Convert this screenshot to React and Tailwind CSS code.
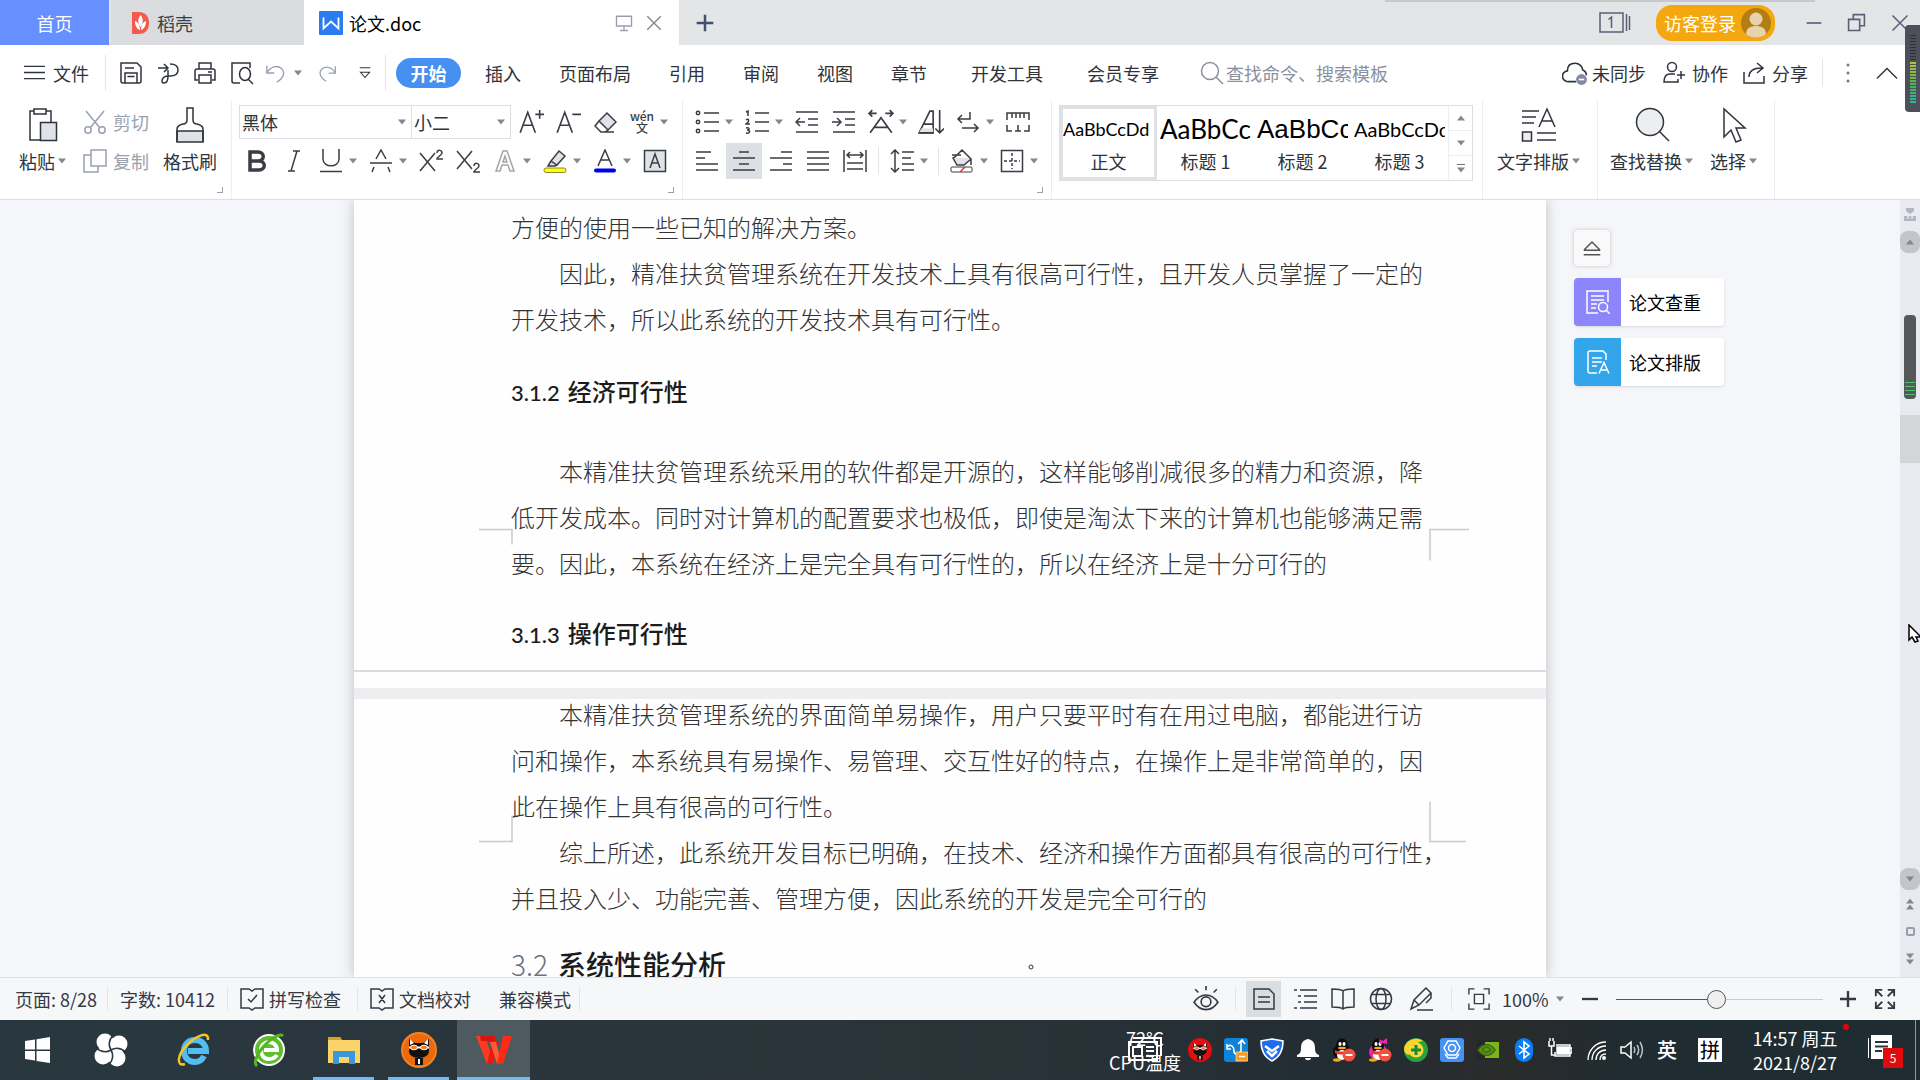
import React, { useState } from 'react';

// Base wrapper for all line icons
function Icon({ size = 24, box = 24, sw = 1.5, className = '', children }) {
    return (
        <svg
            width={size}
            height={size}
            viewBox={`0 0 ${box} ${box}`}
            fill="none"
            stroke="currentColor"
            strokeWidth={sw}
            className={`shrink-0 ${className}`}
            aria-hidden="true"
        >
            {children}
        </svg>
    );
}

function Caret() {
    return (
        <svg width="10" height="6" viewBox="0 0 10 6" className="shrink-0" aria-hidden="true">
            <path d="M1 0.5h8L5 5.5z" fill="#85878c" />
        </svg>
    );
}

function Tool({ label, active, split, dim, children }) {
    return (
        <button aria-label={label} className={`flex h-9 shrink-0 items-center gap-[3px] ${dim ? 'text-[#a3a5a9]' : 'text-[#3a3d44]'}`}>
            <span className={active ? '-mx-1 flex h-9 w-9 items-center justify-center bg-[#dcdfe3]' : 'flex h-9 w-7 items-center justify-center'}>
                {children}
            </span>
            {split && <Caret />}
        </button>
    );
}

const Divider = ({ className = 'h-9' }) => <span className={`w-px shrink-0 bg-[#e3e5e8] ${className}`} />;

const menus = ['插入', '页面布局', '引用', '审阅', '视图', '章节', '开发工具', '会员专享'];

function TitleBar() {
    return (
        <header className="relative flex h-[45px] shrink-0 items-stretch bg-[#e3e5e6] text-lg text-[#3b3f48]">
            <button className="w-[109px] bg-[#6690ff] text-white">首页</button>
            <button className="flex w-[195px] items-center gap-[7px] border-l-2 border-[#e3e5e6] bg-[#dadcdf] pl-5">
                <svg width="19" height="22" viewBox="0 0 19 22" aria-hidden="true">
                    <path d="M1 0h7c7 0 10 5 10 11s-3 11-10 11H1z" fill="#f55b4c" />
                    <path d="M9.500 3c3 4 3 8 0 12C6.500 11 6.500 7 9.500 3z" fill="#fff" />
                    <path d="M4 9c3 1 5 4 5 9-3-1-5-4-5-9zM15 9c-3 1-5 4-5 9 3-1 5-4 5-9z" fill="#fff" />
                </svg>
                稻壳
            </button>
            <div className="flex w-[375px] items-center bg-white pl-[15px] text-black">
                <svg width="24" height="24" viewBox="0 0 24 24" aria-hidden="true">
                    <rect width="24" height="24" rx="1" fill="#2a7cf0" />
                    <path d="M4.500 6.500v11L12 10.500l7.500 7V6.500" fill="none" stroke="#fff" strokeWidth="1.800" />
                </svg>
                <span className="ml-1.5 flex-1">论文.doc</span>
                <button aria-label="在桌面打开" className="mr-3 text-[#9aa0ab]">
                    <Icon size={18} sw={1.800}><path d="M2 3h20v13H2zM12 16v6M7 22h10" /></Icon>
                </button>
                <button aria-label="关闭标签" className="mr-4 text-[#7d838f]">
                    <Icon size={18} sw={1.800}><path d="M3 3l18 18M21 3L3 21" /></Icon>
                </button>
            </div>
            <button aria-label="新建" className="ml-4 text-[#44506c]">
                <Icon size={20} sw={3}><path d="M12 2v20M2 12h20" /></Icon>
            </button>

            <div className="ml-auto flex items-center pr-[11px] text-[#596076]">
                <button aria-label="窗口列表">
                    <svg width="32" height="24" viewBox="0 0 32 24" fill="none" stroke="currentColor" strokeWidth="1.500" aria-hidden="true">
                        <path d="M1 2h23v19H1zM27.500 3v17M30.500 5v14M9.500 8.500l3-2.500v11" />
                    </svg>
                </button>
                <Divider className="ml-3 h-7" />
                <button className="ml-3 flex h-9 items-center gap-[5px] rounded-2xl bg-[#f5a70f] pl-2 pr-1 text-white">
                    访客登录
                    <svg width="30" height="30" viewBox="0 0 30 30" aria-hidden="true">
                        <circle cx="15" cy="15" r="15" fill="#b27d12" />
                        <ellipse cx="15" cy="11" rx="6.500" ry="6.500" fill="#e6d3ac" />
                        <path d="M5 26c0-6 5-8 10-8s10 2 10 8c-5 5-15 5-20 0z" fill="#e6d3ac" />
                    </svg>
                </button>
                <Divider className="ml-3 h-7" />
                <button aria-label="最小化" className="ml-[18px]">
                    <Icon size={16} sw={2.500}><path d="M1 12h22" /></Icon>
                </button>
                <button aria-label="还原" className="ml-[25px]">
                    <Icon size={19} sw={2}><path d="M2 8h14v14H2zM8 8V2h14v14h-6" /></Icon>
                </button>
                <button aria-label="关闭" className="ml-[25px]">
                    <Icon size={18} sw={2}><path d="M2 2l20 20M22 2L2 22" /></Icon>
                </button>
            </div>
            <div className="absolute right-[105px] top-0 h-0.5 w-[430px] bg-[#c6c8c9]" />
        </header>
    );
}

function MenuBar() {
    return (
        <nav className="flex h-[55px] shrink-0 items-center text-lg text-[#2f333b]">
            <button className="ml-6 flex items-center gap-2">
                <Icon size={21}><path d="M0 5h24M0 12h24M0 19h24" /></Icon>
                文件
            </button>
            <Divider className="ml-4 mr-1.5 h-9" />
            <button aria-label="保存" className="flex w-[37px] justify-center">
                <Icon><path d="M2 2h16l4 4v14a2 2 0 0 1-2 2H4a2 2 0 0 1-2-2zM6 22V12h12v10M6 7h9M8.500 15.500h7" /></Icon>
            </button>
            <button aria-label="输出为PDF" className="flex w-[37px] justify-center">
                <Icon><path d="M2 7h9M8 3l4 4-4 4M14 3c5 0 8 2 8 6s-3 6-8 6h-2c-6 0-8 7-4 7 3 0 4-3 4-7V9" /></Icon>
            </button>
            <button aria-label="打印" className="flex w-[37px] justify-center">
                <Icon><path d="M6 8V2h12v6M5 19H2V10a2 2 0 0 1 2-2h16a2 2 0 0 1 2 2v9h-3M6 14h12v8H6zM15 11h4" /></Icon>
            </button>
            <button aria-label="打印预览" className="flex w-[37px] justify-center">
                <Icon><path d="M10 22H4a2 2 0 0 1-2-2V2h18v5M18 18l5 5" /><ellipse cx="15" cy="13" rx="5.500" ry="6.500" /></Icon>
            </button>
            <button aria-label="撤销" className="flex w-[43px] items-center justify-end gap-1.5 text-gray-400">
                <Icon size={22}><path d="M2 4v8h8M2 12C6 5 13 3 18 7c4 4 3 10-5 15" /></Icon>
                <Caret />
            </button>
            <button aria-label="恢复" className="ml-1.5 flex w-[36px] justify-center text-gray-400">
                <Icon size={20}><path d="M22 4v8h-8M22 12C18 5 11 3 6 7c-4 4-3 10 5 15" /></Icon>
            </button>
            <button aria-label="自定义快速访问" className="flex w-10 justify-center">
                <Icon size={18}><path d="M5 5h14M6 11l6 7 6-7z" /></Icon>
            </button>
            <Divider className="h-9" />
            <button className="ml-2.5 h-[30px] w-[65px] rounded-full bg-[#4690f2] font-bold leading-[28px] text-white">开始</button>
            <div className="ml-6 flex gap-[38px] whitespace-nowrap">
                {menus.map(m => (
                    <button key={m} className={m === '开发工具' ? 'px-1.5' : ''}>{m}</button>
                ))}
            </div>
            <label className="ml-[41px] flex items-center gap-0.5 text-[#8a90a0]">
                <Icon><circle cx="10" cy="10" r="8.500" /><path d="M16 16l7 7" /></Icon>
                <input
                    aria-label="查找命令、搜索模板"
                    placeholder="查找命令、搜索模板"
                    className="w-[180px] bg-transparent outline-none placeholder:text-[#8a90a0]"
                />
            </label>

            <div className="ml-auto flex items-center whitespace-nowrap pr-[22px]">
                <button className="flex items-center gap-1">
                    <Icon size={26}>
                        <path d="M13 20H6a5 5 0 0 1-1-10C5 5 8 3 12 3s7 3 7 6c2 1 3.500 2 3.500 5" />
                        <circle cx="18" cy="18" r="5" fill="#8289a5" stroke="none" />
                        <path d="M15.500 18h5" stroke="#fff" />
                    </Icon>
                    未同步
                </button>
                <button className="ml-4 flex items-center gap-1.5">
                    <Icon><path d="M13 13H8c-4 0-6 3-6 8h14v-3M19 10v8M15 14h8" /><circle cx="10" cy="6" r="4.500" /></Icon>
                    协作
                </button>
                <button className="ml-3.5 flex items-center gap-1.5">
                    <Icon><path d="M2 11v11h20v-7M7 16c0-6 4-9 13-9M15 2l6 5-6 5" /></Icon>
                    分享
                </button>
                <Divider className="ml-3.5 h-7" />
                <button aria-label="更多" className="ml-[13px]">
                    <Icon><g fill="#777b83" stroke="none"><circle cx="12" cy="4" r="1.500" /><circle cx="12" cy="12" r="1.500" /><circle cx="12" cy="20" r="1.500" /></g></Icon>
                </button>
                <button aria-label="折叠功能区" className="ml-4">
                    <Icon size={22}><path d="M1 18L12 7l11 11" /></Icon>
                </button>
            </div>
        </nav>
    );
}

function Corner() {
    return <span className="absolute bottom-1.5 right-2 h-1.5 w-1.5 border-b border-r border-gray-400" />;
}

function StylePreview({ name, active, children }) {
    return (
        <button className={`flex w-[97px] flex-col overflow-hidden text-left ${active ? 'border-[3px] border-[#dfe1e4]' : 'border-[3px] border-transparent'}`}>
            <span className="flex h-10 items-center overflow-hidden whitespace-nowrap text-black">{children}</span>
            <span className="w-full text-center leading-6">{name}</span>
        </button>
    );
}

function Ribbon() {
    return (
        <section className="flex shrink-0 border-b border-[#dcdee1] text-lg text-[#2f333b] whitespace-nowrap">
            {/* Clipboard */}
            <div className="relative flex border-r border-[#eceef0] pb-5 pl-[19px] pr-3.5 pt-[5px]">
                <button className="flex w-12 flex-col items-center gap-1">
                    <Icon size={36} box={36} className="mt-0.5">
                        <path d="M9 4H5v29h10M21 4h5v11M9 2h12v5H9z" /><path d="M15.500 15.500h16v18h-16z" fill="#dfe2e6" />
                    </Icon>
                    <span className="flex items-center gap-0.5">粘贴<Caret /></span>
                </button>
                <div className="ml-4 flex flex-col gap-1 text-gray-400">
                    <button className="flex h-[34px] items-center gap-1.5">
                        <Icon><path d="M3 1l14 17M21 1L7 18" /><circle cx="5" cy="20" r="3.200" /><circle cx="19" cy="20" r="3.200" /></Icon>
                        剪切
                    </button>
                    <button className="flex h-9 items-center gap-1.5">
                        <Icon><path d="M8 1h15v16H8zM8 6H1v17h14v-6" /></Icon>
                        复制
                    </button>
                </div>
                <button className="ml-3.5 flex flex-col items-center gap-1">
                    <Icon size={36} box={36} className="mt-0.5">
                        <path d="M5 24h26v11H5z" fill="#dfe2e6" />
                        <path d="M5 35V22c0-3 2-4 6-5 3 0 4-2 4-4V1h6v12c0 2 1 4 4 4 4 1 6 2 6 5v13" />
                    </Icon>
                    格式刷
                </button>
                <Corner />
            </div>

            {/* Font */}
            <div className="relative flex flex-col gap-1 border-r border-[#eceef0] pb-5 pl-[7px] pr-[13px] pt-[5px]">
                <div className="flex h-[34px] items-center">
                    <div className="mr-1.5 flex h-[34px] border border-[#dcdfe2]">
                        <div className="flex w-[172px] items-center border-r border-[#dcdfe2] pl-0.5 pr-1">
                            <select aria-label="字体" className="min-w-0 flex-1 appearance-none bg-transparent outline-none"><option>黑体</option></select>
                            <Caret />
                        </div>
                        <div className="flex w-[98px] items-center pl-0.5 pr-1">
                            <select aria-label="字号" className="min-w-0 flex-1 appearance-none bg-transparent outline-none"><option>小二</option></select>
                            <Caret />
                        </div>
                    </div>
                    <div className="flex gap-[9px]">
                        <Tool label="增大字号"><Icon size={26}><path d="M2 22L9 3l7 19M5 15h9M20 1v8M16 5h8" /></Icon></Tool>
                        <Tool label="减小字号"><Icon size={26}><path d="M2 22L9 3l7 19M5 15h9M16 5h8" /></Icon></Tool>
                        <Tool label="清除格式"><Icon><path d="M14 3l9 9-8 8-9-9z" fill="#dfe2e6" /><path d="M6 11l-4 5 6 6h4l3-2M8 22h13" /></Icon></Tool>
                        <Tool label="拼音指南" split>
                            <span className="flex flex-col items-center text-xs font-medium leading-3"><span>wén</span><span>文</span></span>
                        </Tool>
                    </div>
                </div>
                <div className="flex gap-[9px] pl-1">
                    <Tool label="加粗"><Icon sw={3.500}><path d="M5 3h8c7 0 7 9 0 9H5zM5 12h9c7 0 7 9 0 9H5z" /></Icon></Tool>
                    <Tool label="倾斜"><Icon><path d="M11 2h7M6 22h7M15 2L9 22" /></Icon></Tool>
                    <Tool label="下划线" split><Icon><path d="M4 0v10c0 9 16 9 16 0V0M1 22.500h22" /></Icon></Tool>
                    <Tool label="删除线" split><Icon><path d="M7 10l5-9 5 9M1 14h22M5 18l-2 5M19 18l2 5" /></Icon></Tool>
                    <Tool label="上标"><Icon><path d="M1 4l15 18M16 4L1 22M18 4c0-4 5-3 5 0 0 2-5 4-5 6h6" /></Icon></Tool>
                    <Tool label="下标"><Icon><path d="M1 2l15 18M16 2L1 20M18 17c0-4 5-3 5 0 0 2-5 4-5 6h6" /></Icon></Tool>
                    <Tool label="文字效果" split dim><Icon><path d="M3 22L10 2h4l7 20h-4l-2-6H9l-2 6zM10 13h4l-2-6z" /></Icon></Tool>
                    <Tool label="突出显示" split>
                        <Icon><path d="M8 12l8-10 6 5-8 9zM8 12l-3 5h7l2-1" fill="#dfe2e6" /><rect x="1" y="19" width="22" height="4.500" rx="2" fill="#ff0" stroke="#888a45" strokeWidth="1" /></Icon>
                    </Tool>
                    <Tool label="字体颜色" split>
                        <Icon><path d="M5 17l7-16 7 16M8 11h8" /><rect x="1" y="19.500" width="22" height="4" rx="2" fill="#00e" stroke="none" /></Icon>
                    </Tool>
                    <Tool label="字符底纹"><Icon><path d="M1.500 1.500h21v21h-21z" fill="#dfe2e6" /><path d="M7 19l5-14 5 14M9 14h6" /></Icon></Tool>
                </div>
                <Corner />
            </div>

            {/* Paragraph */}
            <div className="relative flex flex-col gap-1 border-r border-[#eceef0] pb-5 pl-2.5 pr-3 pt-[5px]">
                <div className="flex h-[34px] items-center gap-[9px]">
                    <Tool label="项目符号" split>
                        <Icon><circle cx="3" cy="3" r="1.700" /><circle cx="3" cy="12" r="1.700" /><circle cx="3" cy="21" r="1.700" /><path d="M9 3h15M9 12h15M9 21h15" /></Icon>
                    </Tool>
                    <Tool label="编号" split>
                        <Icon><path d="M1 2l2-1v5M1 10c3-2 4 1 0 4h4M1 18c4-1 4 2 1 2 4 0 3 4-1 3M10 3h14M10 12h14M10 21h14" /></Icon>
                    </Tool>
                    <Tool label="减少缩进"><Icon><path d="M1 2h22M13 9h10M13 15h10M1 22h22M10 12H1M5 8l-4 4 4 4" /></Icon></Tool>
                    <Tool label="增加缩进"><Icon><path d="M1 2h22M13 9h10M13 15h10M1 22h22M0 12h9M5 8l4 4-4 4" /></Icon></Tool>
                    <Tool label="中文版式" split><Icon size={26}><path d="M2 22L12 8l10 14M6 17h12M8 4H1M4 1L1 4l3 3M16 4h7M20 1l3 3-3 3" /></Icon></Tool>
                    <Tool label="排序"><Icon size={26}><path d="M1 22L11 2h3v20zM5 14h9M20 1v21M16 18l4 4 4-4" /><path d="M3 18h11v4H1z" fill="#dfe2e6" stroke="none" /><path d="M1 22h13" /></Icon></Tool>
                    <Tool label="换行符" split><Icon><path d="M14 2v7H2M6 5L2 9l4 4M6 18h16M18 14l4 4-4 4" /></Icon></Tool>
                    <Tool label="制表位"><Icon><path d="M1 10V3h22v7M6 3v5M10 3v5M14 3v5M18 3v5M1 15v6h5M23 15v6h-5M12 15v6M9 21h6" /></Icon></Tool>
                </div>
                <div className="flex items-center gap-[9px]">
                    <Tool label="左对齐"><Icon><path d="M1 3h15M1 9h9M1 15h22M1 21h22" /></Icon></Tool>
                    <Tool label="居中" active><Icon><path d="M7 3h10M1 9h22M7 15h10M1 21h22" /></Icon></Tool>
                    <Tool label="右对齐"><Icon><path d="M12 3h11M1 9h22M14 15h9M1 21h22" /></Icon></Tool>
                    <Tool label="两端对齐"><Icon><path d="M1 3h22M1 9h22M1 15h22M1 21h22" /></Icon></Tool>
                    <Tool label="分散对齐"><Icon><path d="M1 1v22M23 1v22M4 6h16M7 3L4 6l3 3M17 3l3 3-3 3M4 14h16M4 20h16" /></Icon></Tool>
                    <Divider className="h-7" />
                    <Tool label="行距" split><Icon><path d="M5 2v20M1 5l4-4 4 4M1 19l4 4 4-4M12 3h12M12 9h9M12 15h12M12 21h12" /></Icon></Tool>
                    <Divider className="h-7" />
                    <Tool label="底纹颜色" split>
                        <Icon><path d="M4 9h16l-6 7H8z" fill="#dfe2e6" stroke="none" /><path d="M2 6h9M5 8l7-7 9 9-7 6H7L3 9zM21 10v6" /><rect x="1" y="18" width="21" height="5" rx="1" fill="#fff" strokeWidth="1" /><path d="M10 23l5-5" stroke="#d33" /></Icon>
                    </Tool>
                    <Tool label="边框" split><Icon><path d="M1.500 1.500h21v21h-21z" /><path d="M12 4v16M4 12h16" strokeDasharray="3 2" /></Icon></Tool>
                </div>
                <Corner />
            </div>

            {/* Styles gallery */}
            <div className="border-r border-[#eceef0] pl-[7px] pr-[9px] pt-[5px]">
                <div className="flex h-[76px] border border-[#dcdfe2]">
                    <StylePreview name="正文" active><span className="font-['Lato'] text-lg">AaBbCcDd</span></StylePreview>
                    <StylePreview name="标题 1"><span className="font-['Lato'] text-[26px]">AaBbCc</span></StylePreview>
                    <StylePreview name="标题 2"><span className="font-['Liberation_Sans'] text-[26px]">AaBbCc</span></StylePreview>
                    <StylePreview name="标题 3"><span className="font-['Lato'] text-xl">AaBbCcDd</span></StylePreview>
                    <div className="flex w-6 flex-col items-center divide-y divide-[#eceef0] border-l border-[#eceef0]">
                        <button aria-label="上一行" className="flex w-full flex-1 items-center justify-center"><span className="rotate-180"><Caret /></span></button>
                        <button aria-label="下一行" className="flex w-full flex-1 items-center justify-center"><Caret /></button>
                        <button aria-label="更多样式" className="flex w-full flex-1 flex-col items-center justify-center gap-0.5"><span className="h-px w-2 bg-gray-500" /><Caret /></button>
                    </div>
                </div>
            </div>

            <div className="border-r border-[#eceef0] pl-3.5 pr-4 pt-[7px]">
                <button className="flex flex-col items-center gap-1">
                    <Icon size={36} box={36}><path d="M1 4h17M1 10h14M1 16h12M18 20L26 2l8 18M21 14h10M16 26h19M16 33h19" /><path d="M1.500 25h9v9h-9z" fill="#eceef0" /></Icon>
                    <span className="flex items-center gap-0.5">文字排版<Caret /></span>
                </button>
            </div>
            <div className="flex gap-4 border-r border-[#eceef0] pl-3 pr-4 pt-[7px]">
                <button className="flex flex-col items-center gap-1">
                    <Icon size={36} box={36}><circle cx="16" cy="15" r="13.500" fill="#eceef0" /><path d="M25 24l10 10" /></Icon>
                    <span className="flex items-center gap-0.5">查找替换<Caret /></span>
                </button>
                <button className="flex flex-col items-center gap-1">
                    <Icon size={36} box={36}><path d="M8 2v28l7-7 5 12 5-2-5-12h9z" /></Icon>
                    <span className="flex items-center gap-0.5">选择<Caret /></span>
                </button>
            </div>
        </section>
    );
}

function Line({ indent, children }) {
    return <span className={indent ? 'block pl-12' : 'block'}>{children}</span>;
}

function Page() {
    return (
        <article className="relative w-[1192px] shrink-0 overflow-hidden bg-[#fefefe] pt-1 text-2xl leading-[46px] text-[#333] shadow-[0_0_12px_rgba(60,64,72,0.3)]">
            <div className="whitespace-nowrap pl-[157px] font-light">
                <p>
                    <Line>方便的使用一些已知的解决方案。</Line>
                    <Line indent>因此，精准扶贫管理系统在开发技术上具有很高可行性，且开发人员掌握了一定的</Line>
                    <Line>开发技术，所以此系统的开发技术具有可行性。</Line>
                </p>
                <h3 className="mt-[26px] font-medium text-[#1c1c1c]"><span className="mr-2 font-['Lato'] text-[22px]">3.1.2</span>经济可行性</h3>
                <p className="mt-8">
                    <Line indent>本精准扶贫管理系统采用的软件都是开源的，这样能够削减很多的精力和资源，降</Line>
                    <Line>低开发成本。同时对计算机的配置要求也极低，即使是淘汰下来的计算机也能够满足需</Line>
                    <Line>要。因此，本系统在经济上是完全具有可行性的，所以在经济上是十分可行的</Line>
                </p>
                <h3 className="mt-6 font-medium text-[#1c1c1c]"><span className="mr-2 font-['Lato'] text-[22px]">3.1.3</span>操作可行性</h3>
            </div>

            {/* Page break */}
            <div className="mt-3 border-t-2 border-[#dadbdd]" />
            <div className="mt-4 h-[11px] bg-[#eeeef0]" />

            <div className="-mt-2 whitespace-nowrap pl-[157px] font-light">
                <p>
                    <Line indent>本精准扶贫管理系统的界面简单易操作，用户只要平时有在用过电脑，都能进行访</Line>
                    <Line>问和操作，本系统具有易操作、易管理、交互性好的特点，在操作上是非常简单的，因</Line>
                    <Line>此在操作上具有很高的可行性。</Line>
                </p>
                <p>
                    <Line indent>综上所述，此系统开发目标已明确，在技术、经济和操作方面都具有很高的可行性，</Line>
                    <Line>并且投入少、功能完善、管理方便，因此系统的开发是完全可行的</Line>
                </p>
                <h2 className="mt-5 text-[28px] text-[#1c1c1c]"><span className="mr-2.5 font-light text-gray-500">3.2</span><span className="font-medium">系统性能分析</span></h2>
            </div>

            {/* Margin corner marks */}
            <svg width="1192" height="778" viewBox="0 0 1192 778" className="absolute left-0 top-0" fill="none" stroke="#c9cacc" strokeWidth="1.500" aria-hidden="true">
                <path d="M125 329.500h33v15M1115 329.500h-39v31M125 641.500h33v-26M1112 641.500h-36v-40" />
                <circle cx="677" cy="767" r="2" stroke="#333" strokeWidth="1" />
            </svg>
        </article>
    );
}

function SidePanel() {
    return (
        <aside className="min-w-0 flex-1 text-lg text-black">
            <div className="flex flex-col items-start gap-3 pl-7 pt-[30px]">
                <button aria-label="收起" className="flex h-9 w-9 items-center justify-center rounded-sm bg-[#f9f9fa] text-[#555] shadow-[0_0_4px_rgba(0,0,0,0.2)]">
                    <Icon size={18} sw={2}><path d="M2 14L12 4l10 10v1H2zM1 21h22" /></Icon>
                </button>
                <button className="flex h-12 w-[150px] items-center overflow-hidden rounded bg-white shadow">
                    <span className="flex h-12 w-[47px] items-center justify-center bg-[#8d85fb] text-white">
                        <Icon><path d="M12 23H1V1h21v11M5 6h13M5 10h13M5 14h6M5 18h5" /><circle cx="17" cy="17" r="4.500" /><path d="M20 20l4 4" /></Icon>
                    </span>
                    <span className="pl-2">论文查重</span>
                </button>
                <button className="flex h-12 w-[150px] items-center overflow-hidden rounded bg-white shadow">
                    <span className="flex h-12 w-[47px] items-center justify-center bg-[#33a5ea] text-white">
                        <Icon><path d="M11 23H4a2 2 0 0 1-2-2V3a2 2 0 0 1 2-2h13l3 3v6M6 8h10M6 12h10M6 16h5M13 23.500l5-11 5 11M15 20h6" /></Icon>
                    </span>
                    <span className="pl-2">论文排版</span>
                </button>
            </div>
        </aside>
    );
}

function ScrollBar() {
    return (
        <div className="flex w-5 shrink-0 flex-col items-center bg-[#e9eaf1] text-[#8f93a3]">
            <svg width="14" height="14" viewBox="0 0 14 14" className="mt-2" fill="#b3b6bf" aria-hidden="true">
                <path d="M3 0h8v3L7 6 3 3zM1 8h12v5H1z" /><path d="M5 8v3M9 8v3" stroke="#fff" />
            </svg>
            <button aria-label="向上滚动" className="mt-[9px] flex h-[22px] w-5 items-center justify-center rounded-lg bg-[#c3c5cd]">
                <span className="rotate-180"><Caret /></span>
            </button>
            <div className="mt-[62px] flex h-[84px] w-3 flex-col justify-end gap-[3px] rounded bg-[#55575a] px-px pb-1">
                <span className="h-px bg-[#4fc274]" />
                <span className="h-px bg-[#4fc274]" />
                <span className="h-px bg-[#4fc274]" />
                <span className="h-px bg-[#4fc274]" />
            </div>
            <div className="mt-4 h-12 w-5 bg-[#d3d5d8]" />
            <div className="flex-1" />
            <button aria-label="向下滚动" className="flex h-[22px] w-5 items-center justify-center rounded-lg bg-[#c3c5cd]"><Caret /></button>
            <button aria-label="上一页" className="mt-2 flex h-3 flex-col"><span className="rotate-180"><Caret /></span><span className="rotate-180"><Caret /></span></button>
            <button aria-label="选择浏览对象" className="mt-[17px] h-[9px] w-[9px] rounded-[2px] border-2 border-[#9a9dab]" />
            <button aria-label="下一页" className="mb-3 mt-[17px] flex h-3 flex-col"><Caret /><Caret /></button>
        </div>
    );
}

function StatusBar() {
    const [zoom, setZoom] = useState(100);
    return (
        <footer className="flex h-[43px] shrink-0 items-center whitespace-nowrap border-t border-[#dfe1e4] bg-[#f5f7f9] pl-[15px] text-lg text-[#343943]">
            <span className="w-[92px]">页面: 8/28</span>
            <Divider className="h-6" />
            <span className="ml-3 w-[107px]">字数: 10412</span>
            <Divider className="h-6" />
            <button className="ml-3 flex items-center gap-[5px]">
                <Icon><path d="M9 2H1v19h8l3 2 3-2h8V2h-8l-3 2zM8 12l3 3 6-7" /></Icon>
                拼写检查
            </button>
            <Divider className="ml-4 h-6" />
            <button className="ml-3 flex items-center gap-[5px]">
                <Icon><path d="M9 2H1v19h8l3 2 3-2h8V2h-8l-3 2zM9 8l6 8M15 8l-6 8" /></Icon>
                文档校对
            </button>
            <button className="ml-7">兼容模式</button>
            <Divider className="ml-2 h-6" />

            <div className="ml-auto flex items-center pr-6">
                <button aria-label="护眼模式"><Icon size={26}><path d="M1 15c6-9 16-9 22 0-6 9-16 9-22 0zM12 4V0M5 6L2 3M19 6l3-3" /><circle cx="12" cy="14.500" r="4.500" /></Icon></button>
                <Divider className="ml-4 h-6" />
                <button aria-label="页面视图" className="ml-2.5 flex h-9 w-[35px] items-center justify-center bg-[#d9dee2]"><Icon><path d="M2 2h15l5 5v15H2zM6 10h12M6 15h12" /></Icon></button>
                <button aria-label="大纲" className="ml-3"><Icon><path d="M1 3h3M7 3h17M5 9h3M11 9h13M5 15h3M11 15h13M1 21h3M7 21h17" /></Icon></button>
                <button aria-label="阅读版式" className="ml-3.5"><Icon><path d="M12 4c-2-2-5-2-11-2v18c6 0 9 0 11 2 2-2 5-2 11-2V2C17 2 14 2 12 4zM12 4v18" /></Icon></button>
                <button aria-label="Web版式" className="ml-3.5"><Icon><circle cx="12" cy="12" r="10.500" /><ellipse cx="12" cy="12" rx="5" ry="10.500" /><path d="M3 7.500h18M3 16.500h18" /></Icon></button>
                <button aria-label="写作模式" className="ml-4"><Icon><path d="M2 22l3-9L17 1l5 5-12 12-8 4zM5 13l5 5M22 6v5l-5 5M8 23h16" /></Icon></button>
                <Divider className="ml-[18px] h-6" />
                <button aria-label="最佳显示比例" className="ml-4"><Icon size={22}><path d="M7 7h10v10H7zM1 7V1h6M17 1h6v6M23 17v6h-6M7 23H1v-6" /></Icon></button>
                <button className="ml-3 flex w-[63px] items-center justify-between">{zoom}%<Caret /></button>
                <button aria-label="缩小" className="ml-[17px]"><Icon size={16} sw={3.500}><path d="M0 12h24" /></Icon></button>
                <input
                    type="range"
                    min="0"
                    max="206"
                    value={zoom}
                    onChange={e => setZoom(Number(e.target.value))}
                    aria-label="显示比例"
                    className="ml-[18px] h-5 w-[207px] appearance-none bg-[linear-gradient(to_right,#555_48%,#c9cbce_48%)] bg-[length:100%_1px] bg-center bg-no-repeat [&::-webkit-slider-thumb]:h-[19px] [&::-webkit-slider-thumb]:w-[19px] [&::-webkit-slider-thumb]:appearance-none [&::-webkit-slider-thumb]:rounded-full [&::-webkit-slider-thumb]:border [&::-webkit-slider-thumb]:border-solid [&::-webkit-slider-thumb]:border-[#555] [&::-webkit-slider-thumb]:bg-[#efeff0]"
                />
                <button aria-label="放大" className="ml-[17px]"><Icon size={16} sw={3.500}><path d="M12 0v24M0 12h24" /></Icon></button>
                <button aria-label="全屏显示" className="ml-[18px]"><Icon size={22} sw={2}><path d="M2 9V2h7M2 2l7 7M15 2h7v7M22 2l-7 7M22 15v7h-7M22 22l-7-7M9 22H2v-7M2 22l7-7" /></Icon></button>
            </div>
        </footer>
    );
}

function Penguin({ pink }) {
    return (
        <svg width="24" height="24" viewBox="0 0 24 24" aria-hidden="true">
            <ellipse cx="10" cy="14" rx="9" ry="8" fill={pink ? '#f026b8' : '#0b0b0b'} />
            <ellipse cx="10" cy="8" rx="6" ry="7.500" fill="#0b0b0b" />
            <ellipse cx="10" cy="17" rx="5" ry="5" fill="#fff" />
            <path d="M3 12c4 2 10 2 14 0v3c-5 2-10 2-14 0z" fill="#e33" />
            <ellipse cx="8" cy="6" rx="1.500" ry="2" fill="#fff" /><ellipse cx="12" cy="6" rx="1.500" ry="2" fill="#fff" />
            <ellipse cx="10" cy="10" rx="4" ry="1.300" fill="#f7a51c" />
            {pink && <path d="M11 1l4 2 4-3v6l-4-1-3 1z" fill="#f026b8" />}
            <ellipse cx="5" cy="22" rx="4" ry="1.700" fill="#f7a51c" />
            <circle cx="17" cy="17" r="6.500" fill="#f0523f" /><path d="M13.500 17h7" stroke="#fff" strokeWidth="2" />
        </svg>
    );
}

function CatFace({ size, bg, rim }) {
    return (
        <svg width={size} height={size} viewBox="0 0 36 36" aria-hidden="true">
            <circle cx="18" cy="18" r="17" fill={bg} stroke={rim} strokeWidth="2" />
            <path d="M8 7l6 4h8l6-4v12c0 4-4 7-10 7S8 23 8 19z" fill="#111" />
            <path d="M9 7l4 4-4 2zM27 7l-4 4 4 2z" fill="#fff" />
            <path d="M8 14.500h20v2H8z" fill="#fff" />
            <ellipse cx="13" cy="15.500" rx="3.500" ry="2.300" fill="#f47a20" stroke="#fff" />
            <ellipse cx="23" cy="15.500" rx="3.500" ry="2.300" fill="#f47a20" stroke="#fff" />
            <path d="M14 26h8v7h-8z" fill="#111" /><path d="M17 27h2v5h-2z" fill="#fff" />
        </svg>
    );
}

function TaskBar() {
    return (
        <div className="relative flex h-[60px] shrink-0 items-center bg-[linear-gradient(to_right,#293840,#2a3338_50%,#222d33_70%,#2b2b2b_78%,#1f2c32_85%)] text-lg text-white">
            <button aria-label="开始菜单" className="flex w-[73px] justify-center">
                <svg width="26" height="26" viewBox="0 0 26 26" fill="#fff" aria-hidden="true"><path d="M1 4l10-1.500v10H1zM12.500 2.300L26 0v12.500H12.500zM1 14h10v9.500L1 22zM12.500 14H26v12l-13.500-2z" /></svg>
            </button>
            <button aria-label="Fan" className="flex w-[76px] justify-center">
                <svg width="34" height="34" viewBox="0 0 34 34" aria-hidden="true">
                    <g fill="#fff">
                        <circle cx="11" cy="9" r="8.500" /><circle cx="25" cy="11" r="8.500" />
                        <circle cx="23" cy="25" r="8.500" /><circle cx="9" cy="23" r="8.500" /><circle cx="17" cy="17" r="6" />
                    </g>
                    <path d="M19 2c-4 5-5 10-2 15M32 19c-5-4-10-5-15-2M15 32c4-5 5-10 2-15M2 15c5 4 10 5 15 2" fill="none" stroke="#293840" strokeWidth="1.600" />
                </svg>
            </button>
            <button aria-label="Internet Explorer" className="flex w-[88px] justify-center">
                <svg width="34" height="36" viewBox="0 0 34 36" fill="none" aria-hidden="true">
                    <path d="M28 24c-2 4-5 6-9 6-7 0-11-5-11-11S12 8 19 8s11 5 11 11H12" stroke="#53bdf0" strokeWidth="6" />
                    <path d="M9 32c-9 3-8-9 2-19C20 4 33-2 32 8" stroke="#f5c42b" strokeWidth="2.500" />
                </svg>
            </button>
            <button aria-label="安全浏览器" className="flex w-16 justify-center">
                <svg width="34" height="36" viewBox="0 0 34 36" fill="none" aria-hidden="true">
                    <circle cx="17" cy="18" r="15" fill="#5fbf2b" stroke="#fff" strokeWidth="2" />
                    <path d="M25 23c-2 3-5 4-8 4-5 0-8-4-8-9s4-8 8-8 8 3 8 8H12" stroke="#fff" strokeWidth="4" />
                    <path d="M5 34c-4-3 0-12 7-20S28 1 31 4" stroke="#56b325" strokeWidth="3" />
                </svg>
            </button>
            <div className="ml-3 flex h-[60px] w-[61px] items-center justify-center border-b-[3px] border-[#76b9ed] pt-[3px]">
                <button aria-label="文件资源管理器">
                    <svg width="34" height="30" viewBox="0 0 34 30" aria-hidden="true">
                        <path d="M1 2h12l2 3h18v23H1z" fill="#fad36a" /><path d="M1 2h12l2 3H1z" fill="#d9a21b" />
                        <path d="M6 29V16h22v13h-6v-7H12v7z" fill="#3b97dc" />
                    </svg>
                </button>
            </div>
            <div className="ml-3.5 flex h-[60px] w-[61px] items-center justify-center border-b-[3px] border-[#76b9ed] pt-[3px]">
                <button aria-label="雷电"><CatFace size={36} bg="#e9690c" rim="#f58220" /></button>
            </div>
            <div className="ml-2 flex h-[60px] w-[73px] items-center justify-center border-b-[3px] border-[#76b9ed] bg-[#4d5a60] pt-[3px]">
                <button aria-label="WPS">
                    <svg width="36" height="28" viewBox="0 0 36 28" aria-hidden="true">
                        <path d="M0 0h9l9 28h-7z" fill="#ff3b1f" /><path d="M4 0h15v5H5z" fill="#d9140c" />
                        <path d="M16 6h7l-6 22h-6z" fill="#e8190f" /><path d="M14 6h6l6 22h-5z" fill="#ff5a35" /><path d="M27 0h9l-9 28h-6z" fill="#ff2a14" />
                    </svg>
                </button>
            </div>

            <div className="ml-auto flex items-center pr-1">
                <div className="relative flex w-[78px] flex-col items-center leading-6">
                    <span>72℃</span>
                    <span>CPU温度</span>
                    <svg width="36" height="26" viewBox="0 0 36 26" fill="none" stroke="#fff" strokeWidth="2" className="absolute left-[21px] top-[11px]" aria-hidden="true">
                        <path d="M2 5h28v18H2zM6 1h28v18M6 10h9v9H6zM19 10h8M19 14h8M19 19h8" />
                    </svg>
                </div>
                <div className="ml-1 flex items-center gap-3">
                    <CatFace size={24} bg="#e10f0f" rim="#e10f0f" />
                    <svg width="24" height="24" viewBox="0 0 24 24" aria-hidden="true">
                        <rect width="24" height="24" rx="3" fill="#0f83d8" /><path d="M3 9c4-4 7 0 7 4s4 4 7 0V4M14 6l4-4 3 4M3 6v5h4" fill="none" stroke="#fff" strokeWidth="1.600" />
                        <rect x="12" y="14" width="12" height="9" fill="#f79a1d" stroke="#fff" strokeWidth="0.500" /><path d="M15 18.500h6" stroke="#fff" strokeWidth="1.500" />
                    </svg>
                    <svg width="24" height="24" viewBox="0 0 24 24" aria-hidden="true">
                        <path d="M12 1l11 2c0 10-3 16-11 20C4 19 1 13 1 3z" fill="#1e6cf0" stroke="#fff" strokeWidth="1.500" /><path d="M5 8l7 5 7-5M7 13l5 5 5-5" fill="none" stroke="#fff" strokeWidth="2.500" />
                    </svg>
                    <svg width="24" height="24" viewBox="0 0 24 24" fill="#fff" aria-hidden="true"><path d="M12 1c5 1 7 4 7 9 0 4 1 6 4 7v2H1v-2c3-1 4-3 4-7 0-5 2-8 7-9zM9 20h6c0 3-6 3-6 0z" /></svg>
                    <Penguin />
                    <Penguin pink />
                    <svg width="24" height="24" viewBox="0 0 24 24" aria-hidden="true"><circle cx="12" cy="12" r="12" fill="#2aa43a" /><path d="M0 10C2 2 12-2 19 3c-9 1-8 8-12 13-3 2-7 0-7-6z" fill="#fbd32b" /><circle cx="12" cy="12" r="7.500" fill="#fbdb3a" /><path d="M12 7v10M7 12h10" stroke="#188a35" strokeWidth="3" /></svg>
                    <svg width="24" height="24" viewBox="0 0 24 24" fill="none" stroke="#fff" aria-hidden="true"><rect width="24" height="24" rx="3" fill="#4592f4" stroke="none" /><path d="M8 3h8l4 7-4 7H8l-4-7z" strokeWidth="1.500" /><circle cx="12" cy="10" r="3.500" strokeWidth="1.500" /><path d="M5 16l3 4h8l3-4" strokeWidth="1.300" /></svg>
                    <svg width="24" height="24" viewBox="0 0 24 24" fill="none" aria-hidden="true"><path d="M1 2h22v20H1z" fill="#23282b" /><path d="M9 4h14v16H9z" fill="#7ab51d" /><path d="M2 12c4-6 12-8 17 0-5 7-12 7-17 0zM6 12c2-3 6-4 9 0-3 3-6 3-9 0z" fill="#5f9a18" stroke="#3e6a12" strokeWidth="1.500" /></svg>
                    <svg width="24" height="24" viewBox="0 0 24 24" fill="none" aria-hidden="true"><rect x="3" width="18" height="24" rx="9" fill="#0a7df5" /><path d="M7 8l10 8-5 4V4l5 4-10 8" stroke="#fff" strokeWidth="1.600" /></svg>
                    <Icon><path d="M8 7h14v11H7v-4M22 10h2v5h-2M1 3v5h5V3M2 3V0M5 3V0M3.500 8v9H7" /><path d="M9 9h12v7H9z" fill="#fff" /></Icon>
                    <Icon sw={1.300}><path d="M4 22C4 12 12 4 22 4M8 22c0-8 6-14 14-14M12 22c0-6 4-10 10-10M16 22c0-4 2-6 6-6" /><circle cx="20" cy="20" r="2" fill="#fff" stroke="none" /></Icon>
                    <Icon><path d="M1 9v6h4l6 5V4L5 9z" /><path d="M14 9c1 2 1 4 0 6M17 7c2 3 2 7 0 10M20 4c3 5 3 11 0 16" opacity="0.7" /></Icon>
                </div>
                <span className="ml-3 w-[22px] text-center text-xl font-medium leading-6">英</span>
                <span className="ml-5 h-6 w-6 bg-white text-center text-xl leading-6 text-black">拼</span>
                <div className="relative ml-[23px] w-[100px] text-center leading-6">
                    <div>14:57 周五</div>
                    <div>2021/8/27</div>
                    <span className="absolute -right-1 -top-0.5 h-1.5 w-1.5 rounded-full bg-red-600" />
                </div>
                <button aria-label="通知" className="relative ml-[22px] mr-3 h-9 w-9">
                    <svg width="26" height="26" viewBox="0 0 26 26" aria-hidden="true" className="mb-1.5"><path d="M1.500 4v20" stroke="#fff" /><path d="M4 1h21v24H4z" fill="#fff" /><path d="M8 8h13M8 12.500h13M8 17h7" stroke="#293338" strokeWidth="2" /></svg>
                    <span className="absolute bottom-0 right-0 h-5 w-5 bg-[#e00b0b] text-center text-xs leading-5">5</span>
                </button>
                <Divider className="h-[60px] opacity-60" />
            </div>
        </div>
    );
}

export default function App() {
    return (
        <div className="relative flex h-screen flex-col overflow-hidden bg-white font-['Noto_Sans_CJK_SC',sans-serif]">
            <TitleBar />
            <MenuBar />
            <Ribbon />
            <main className="flex min-h-0 flex-1 overflow-hidden bg-[#f5f6f9]">
                <div className="min-w-0 flex-1" />
                <Page />
                <SidePanel />
                <ScrollBar />
            </main>
            <StatusBar />
            <TaskBar />

            {/* Floating level meter and mouse pointer */}
            <div className="absolute right-0 top-[25px] flex h-[87px] w-[15px] flex-col items-center rounded-l bg-[#4d505b] pt-2.5">
                <span className="h-[26px] w-1.5 bg-[repeating-linear-gradient(#2e3036_0_1px,#4d505b_1px_3px)]" />
                <span className="h-[42px] w-1.5 bg-[repeating-linear-gradient(#4d505b_0_1px,transparent_1px_3px),linear-gradient(#c4c13c,#49b05a_60%,#2fb4a8)]" />
            </div>
            <svg width="13" height="20" viewBox="0 0 13 20" className="absolute right-0 top-[624px]" fill="#fff" stroke="#000" strokeWidth="1.500" aria-hidden="true">
                <path d="M2 1v15l3-3 3 5 3-1-2-4h5z" />
            </svg>
        </div>
    );
}
